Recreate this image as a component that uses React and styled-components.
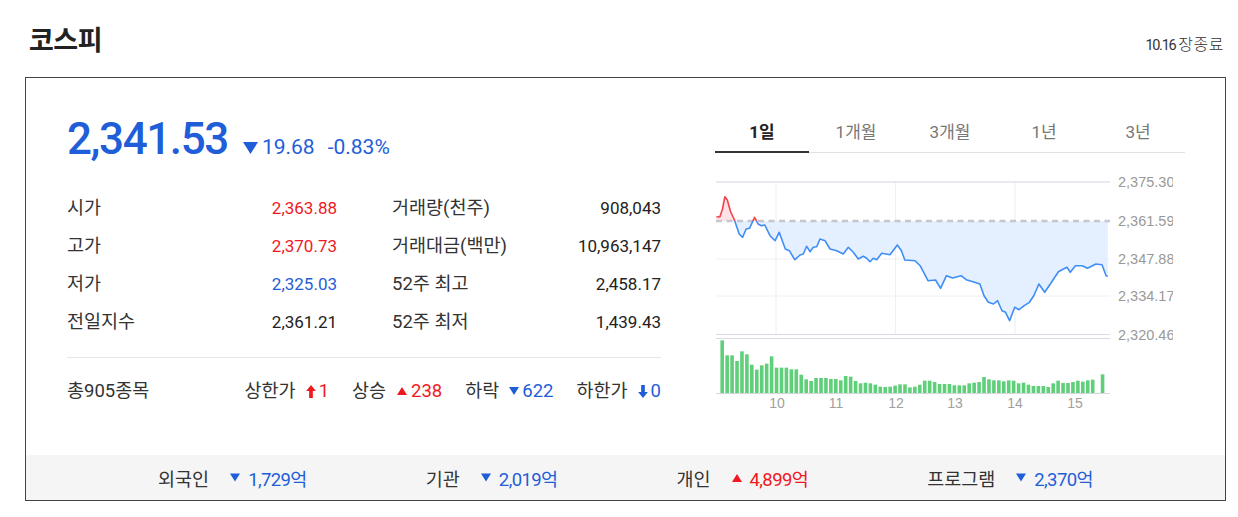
import React from "react";
import styled, { createGlobalStyle } from "styled-components";

const Global = createGlobalStyle`
  html, body { margin: 0; padding: 0; background: #fff; }
  body { font-family: "Roboto", "Noto Sans CJK KR", sans-serif; color: #222; }
  * { box-sizing: border-box; }
`;

const BLUE = "#1f5ed8";
const RED = "#f0191f";

const Page = styled.div`
  width: 1201px;
  margin-left: 25px;
`;

const Header = styled.header`
  height: 77px;
  display: flex;
  align-items: center;
  justify-content: space-between;
  padding-right: 2px;
`;

const Title = styled.h2`
  margin: 0 0 0 4px;
  font-family: "Noto Sans CJK KR", sans-serif;
  font-size: 27px;
  font-weight: 700;
  color: #222;
  line-height: 1;
  letter-spacing: -0.5px;
`;

const Status = styled.span`
  display: inline-flex;
  align-items: baseline;
  gap: 3px;
  margin-top: 8px;
  color: #333;
`;

const StatusDate = styled.span`
  font-family: "Roboto", sans-serif;
  font-size: 14.5px;
  letter-spacing: -1.3px;
`;

const StatusText = styled.span`
  font-family: "Noto Sans CJK KR", sans-serif;
  font-size: 16px;
  letter-spacing: 0.5px;
  font-weight: 300;
`;

const Box = styled.section`
  border: 1px solid #444;
`;

const Top = styled.div`
  height: 377px;
  display: flex;
  padding-left: 41px;
  gap: 54px;
`;

const Left = styled.div`
  width: 594px;
  padding-top: 39px;
`;

const PriceRow = styled.div`
  display: flex;
  align-items: baseline;
  height: 44px;
`;

const Price = styled.span`
  font-size: 44px;
  line-height: 1;
  letter-spacing: -1.4px;
  color: ${BLUE};
  font-weight: 500;
`;

const Change = styled.span`
  font-size: 21px;
  color: ${BLUE};
  display: inline-flex;
  align-items: baseline;
  gap: 4px;
  margin-left: ${(p) => p.$ml}px;
`;

const Stats = styled.div`
  margin-top: 28px;
  display: grid;
  grid-template-columns: 270px 269px;
  column-gap: 55px;
`;

const Cell = styled.div`
  display: flex;
  justify-content: space-between;
  align-items: baseline;
  height: 38px;
  line-height: 38px;
`;

const Label = styled.span`
  color: #333;
  font-size: 18.5px;
`;

const Value = styled.span`
  font-size: 17px;
  color: ${(p) => p.$color || "#222"};
`;

const Divider = styled.hr`
  margin: 16px 0 0;
  border: 0;
  border-top: 1px solid #e6e6e6;
`;

const Summary = styled.div`
  padding-top: 14px;
  display: flex;
  justify-content: space-between;
  height: 52px;
  line-height: 38px;
  font-size: 18.5px;
  color: #333;
`;

const Counts = styled.div`
  display: flex;
  gap: 23px;
`;

const Count = styled.span`
  display: inline-flex;
  align-items: center;
  gap: 10px;
`;

const Num = styled.span`
  color: ${(p) => p.$color};
  display: inline-flex;
  align-items: center;
  gap: 3px;
`;

const Right = styled.div`
  width: 470px;
  padding-top: 35px;
`;

const Tabs = styled.div`
  display: grid;
  grid-template-columns: repeat(5, 1fr);
  border-bottom: 1px solid #e2e2e2;
`;

const Tab = styled.div`
  text-align: center;
  height: 40px;
  line-height: 38px;
  font-size: 17px;
  color: ${(p) => (p.$active ? "#222" : "#777")};
  font-weight: ${(p) => (p.$active ? 700 : 400)};
  border-bottom: 2px solid ${(p) => (p.$active ? "#333" : "transparent")};
  margin-bottom: -1px;
`;

const ChartSvg = styled.svg`
  display: block;
  overflow: hidden;
`;

const Footer = styled.div`
  height: 45px;
  background: #f5f5f5;
  display: flex;
  align-items: center;
  justify-content: center;
  gap: 119px;
  font-size: 18.5px;
`;

const Flow = styled.div`
  display: inline-flex;
  align-items: center;
  gap: 21px;
  color: #333;
`;

const FlowVal = styled.span`
  display: inline-flex;
  align-items: center;
  gap: 8px;
  color: ${(p) => p.$color};
  letter-spacing: -0.6px;
`;

const TriDown = ({ w = 10, h = 8, color = BLUE }) => (
  <svg width={w} height={h} viewBox="0 0 10 8">
    <path d="M0 0 H10 L5 8 Z" fill={color} />
  </svg>
);
const TriUp = ({ w = 12, h = 8, color = RED }) => (
  <svg width={w} height={h} viewBox="0 0 10 8">
    <path d="M0 8 H10 L5 0 Z" fill={color} />
  </svg>
);
const ArrowUp = ({ color = RED }) => (
  <svg width="10" height="13" viewBox="0 0 9 12">
    <path d="M4.5 0 L9 5.5 H6.2 V12 H2.8 V5.5 H0 Z" fill={color} />
  </svg>
);
const ArrowDown = ({ color = BLUE }) => (
  <svg width="10" height="13" viewBox="0 0 9 12">
    <path d="M4.5 12 L9 6.5 H6.2 V0 H2.8 V6.5 H0 Z" fill={color} />
  </svg>
);

const OX = 715;
const OY = 154;
const PREV = 222;
const PLOT_L = 716;
const PLOT_R = 1110;

const pts = [
  [716.4, 217.7], [719.8, 218], [722.5, 210], [724.9, 197.7], [727.3, 201], [730.7, 213],
  [734.1, 220], [739.2, 235], [742.7, 238.3], [746.1, 230], [749.5, 229.3], [754.6, 218.3],
  [758, 225], [761.4, 226.7], [764.8, 226], [770, 236.7], [775.1, 241.7], [779.2, 233.3],
  [785.3, 250], [789.4, 251.7], [793.9, 259.3], [795, 260.7], [800, 256], [803.3, 255],
  [806.7, 247.3], [810, 252.7], [813.3, 248.3], [816.7, 247.7], [820, 240], [825, 241.7],
  [830, 250], [836.7, 251.7], [843.3, 255], [848.3, 248.3], [853.3, 253.3], [858.3, 260],
  [863.3, 257.3], [866.7, 259.3], [870, 262.7], [873.3, 259.3], [876.7, 260.7],
  [881.7, 254.3], [890, 255.7], [897.3, 246], [901.4, 251.7], [904.8, 261], [915, 261.7],
  [920.1, 266.7], [928, 281.7], [935.5, 281], [940.6, 289.3], [946.4, 276.7], [952.6, 279],
  [961.1, 276.7], [966.2, 280.7], [973, 282.7], [979.9, 285], [984, 296.7], [988.4, 303.3],
  [993.5, 305], [997.6, 301.7], [1002, 311.7], [1005.5, 313.3], [1009.6, 321.7],
  [1014.7, 308.3], [1019.1, 310.7], [1024.2, 306.7], [1029.4, 303.3], [1033.8, 296.7],
  [1038.9, 285], [1044.7, 293.3], [1051.5, 283.3], [1058.4, 272.7], [1063.5, 270],
  [1066.9, 268.3], [1070.3, 273.3], [1075.4, 266.7], [1082.3, 266.7], [1087.4, 269.3],
  [1095.9, 265], [1102, 265.7], [1106.1, 276.7], [1107.8, 277.3],
].map(([x, y]) => [x - OX, y - OY]);

const volTops = [
  275, 320, 320, 337, 308, 317, 348, 363, 350, 345, 323, 357, 357, 357, 362, 362, 378, 392,
  397, 388, 388, 388, 391, 391, 395, 382, 384, 397, 404, 402, 404, 408, 414, 415, 414, 411,
  407, 407, 416, 414, 408, 396, 396, 400, 406, 406, 406, 410, 410, 410, 404, 402, 400, 385,
  392, 395, 395, 398, 395, 396, 404, 402, 408, 412, 412, 412, 415, 404, 396, 403, 403, 400,
  396, 399, 395, 393, null, 377,
];

const yLabels = [
  ["2,375.30", 183],
  ["2,361.59", 222],
  ["2,347.88", 260],
  ["2,334.17", 297],
  ["2,320.46", 336],
];
const xLabels = [
  ["10", 777], ["11", 836], ["12", 896], ["13", 955], ["14", 1015], ["15", 1075],
];

function Chart() {
  const line = pts.map(([x, y], i) => `${i ? "L" : "M"}${x} ${y}`).join(" ");
  const py = PREV - OY;
  const first = pts[0];
  const last = pts[pts.length - 1];
  const area =
    `M${first[0]} ${py} ` + pts.map(([x, y]) => `L${x} ${y}`).join(" ") + ` L${last[0]} ${py} Z`;
  const gx1 = PLOT_L - OX;
  const gx2 = PLOT_R - OX;
  return (
    <ChartSvg width="458" height="262" viewBox="0 0 458 262">
      <defs>
        <clipPath id="above">
          <rect x="0" y="0" width="458" height={py} />
        </clipPath>
        <clipPath id="below">
          <rect x="0" y={py} width="458" height="200" />
        </clipPath>
      </defs>
      {[776, 895.5, 1015].map((x) => (
        <line key={x} x1={x - OX} x2={x - OX} y1={183 - OY} y2={335 - OY} stroke="#eeeef3" strokeWidth="1" />
      ))}
      <line x1={gx1} x2={gx2} y1={183 - OY} y2={183 - OY} stroke="#e2e2ea" strokeWidth="1.5" />
      {[260, 297].map((y) => (
        <line key={y} x1={gx1} x2={gx2} y1={y - OY} y2={y - OY} stroke="#f0f0f4" strokeWidth="1" />
      ))}
      <line x1={gx1} x2={gx2} y1={335.5 - OY} y2={335.5 - OY} stroke="#d9d9e4" strokeWidth="1" />
      <line x1={gx1} x2={gx2} y1={339.5 - OY} y2={339.5 - OY} stroke="#d9d9e4" strokeWidth="1" />
      <path d={area} fill="#e4efff" clipPath="url(#below)" />
      <path d={area} fill="#fde3e5" clipPath="url(#above)" />
      <line x1={gx1} x2={gx2} y1={py} y2={py} stroke="#c6c6d0" strokeWidth="2.5" strokeDasharray="6 4.5" />
      <path d={line} fill="none" stroke="#3f8ef7" strokeWidth="1.6" strokeLinejoin="round" clipPath="url(#below)" />
      <path d={line} fill="none" stroke="#f4424c" strokeWidth="1.6" strokeLinejoin="round" clipPath="url(#above)" />
      {volTops.map((t, i) =>
        t == null ? null : (
          <rect
            key={i}
            x={722.2 + i * 4.94 - 1.8 - OX}
            y={394 - (433 - t) / 3 - OY}
            width="3.6"
            height={(433 - t) / 3}
            fill="#5fcf7a"
          />
        )
      )}
      <line x1={gx1} x2={gx2} y1={394.5 - OY} y2={394.5 - OY} stroke="#d6d6e0" strokeWidth="1" />
      {yLabels.map(([t, y]) => (
        <text key={t} x={1118 - OX} y={y - OY + 5} fontFamily="Liberation Sans, Arial, sans-serif" fontSize="14.5" fill="#999">
          {t}
        </text>
      ))}
      {xLabels.map(([t, x]) => (
        <text key={t} x={x - OX} y={404 - OY + 5} textAnchor="middle" fontFamily="Liberation Sans, Arial, sans-serif" fontSize="14" fill="#a0a0a0">
          {t}
        </text>
      ))}
    </ChartSvg>
  );
}

const stats = [
  ["시가", "2,363.88", RED, "거래량(천주)", "908,043"],
  ["고가", "2,370.73", RED, "거래대금(백만)", "10,963,147"],
  ["저가", "2,325.03", BLUE, "52주 최고", "2,458.17"],
  ["전일지수", "2,361.21", null, "52주 최저", "1,439.43"],
];

const tabs = ["1일", "1개월", "3개월", "1년", "3년"];

const flows = [
  ["외국인", "down", "1,729억"],
  ["기관", "down", "2,019억"],
  ["개인", "up", "4,899억"],
  ["프로그램", "down", "2,370억"],
];

export default function App() {
  return (
    <>
      <Global />
      <Page>
        <Header>
          <Title>코스피</Title>
          <Status>
            <StatusDate>10.16</StatusDate>
            <StatusText>장종료</StatusText>
          </Status>
        </Header>
        <Box>
          <Top>
            <Left>
              <PriceRow>
                <Price>2,341.53</Price>
                <Change $ml={15}>
                  <TriDown w={15} h={12} />
                  19.68
                </Change>
                <Change $ml={13}>-0.83%</Change>
              </PriceRow>
              <Stats>
                {stats.map(([l1, v1, c1, l2, v2]) => (
                  <React.Fragment key={l1}>
                    <Cell>
                      <Label>{l1}</Label>
                      <Value $color={c1}>{v1}</Value>
                    </Cell>
                    <Cell>
                      <Label>{l2}</Label>
                      <Value>{v2}</Value>
                    </Cell>
                  </React.Fragment>
                ))}
              </Stats>
              <Divider />
              <Summary>
                <span>총905종목</span>
                <Counts>
                  <Count>
                    상한가
                    <Num $color={RED}>
                      <ArrowUp />1
                    </Num>
                  </Count>
                  <Count>
                    상승
                    <Num $color={RED}>
                      <TriUp />238
                    </Num>
                  </Count>
                  <Count>
                    하락
                    <Num $color={BLUE}>
                      <TriDown />622
                    </Num>
                  </Count>
                  <Count>
                    하한가
                    <Num $color={BLUE}>
                      <ArrowDown />0
                    </Num>
                  </Count>
                </Counts>
              </Summary>
            </Left>
            <Right>
              <Tabs>
                {tabs.map((t, i) => (
                  <Tab key={t} $active={i === 0}>
                    {t}
                  </Tab>
                ))}
              </Tabs>
              <Chart />
            </Right>
          </Top>
          <Footer>
            {flows.map(([l, dir, v]) => (
              <Flow key={l}>
                {l}
                <FlowVal $color={dir === "up" ? RED : BLUE}>
                  {dir === "up" ? <TriUp w={10} h={10} /> : <TriDown w={10} h={9} />}
                  {v}
                </FlowVal>
              </Flow>
            ))}
          </Footer>
        </Box>
      </Page>
    </>
  );
}
